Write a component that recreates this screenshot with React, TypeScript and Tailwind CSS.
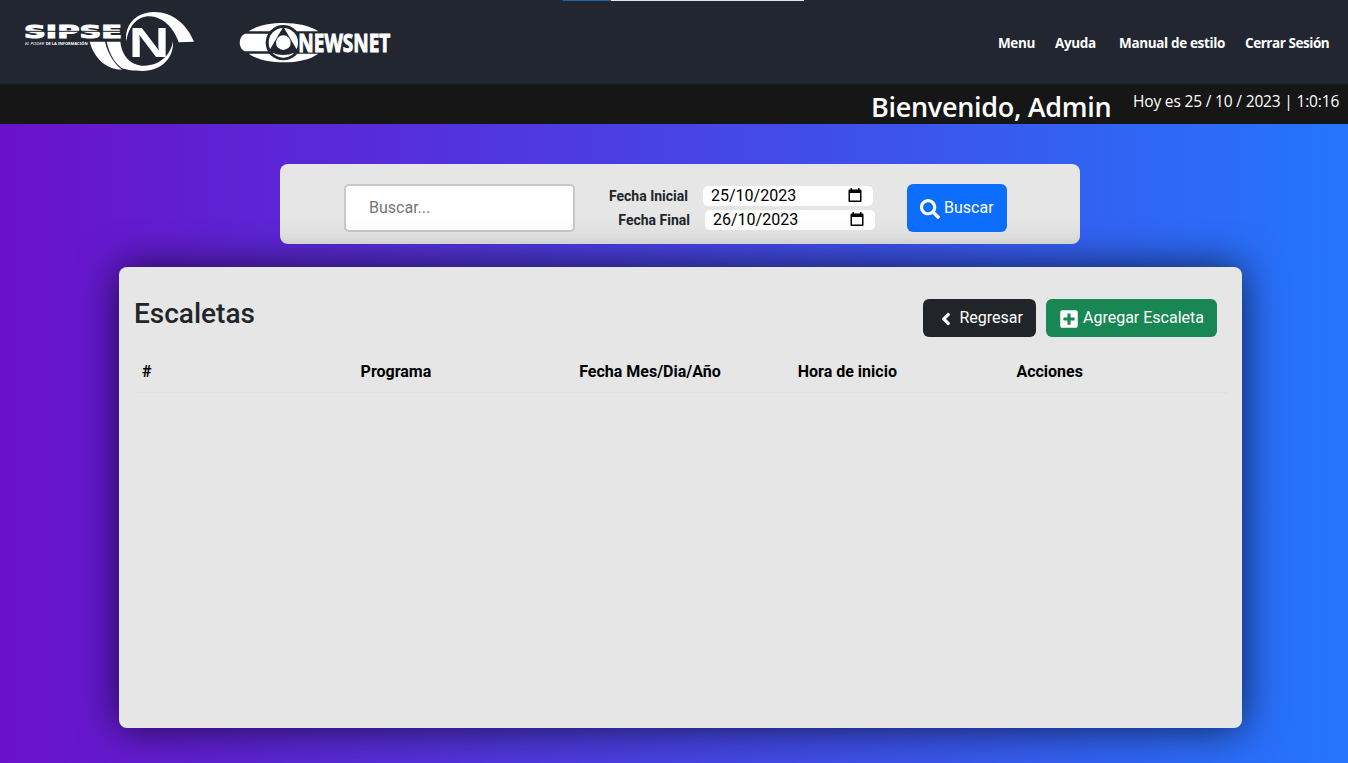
import { FaSearch, FaAngleLeft, FaPlusSquare } from "react-icons/fa";

function SipseLogo() {
  return (
    <svg width="200" height="84" viewBox="0 0 600 252" fill="#fff" role="img" aria-label="SIPSE">
      <text x="42" y="114" fontFamily="DejaVu Sans, sans-serif" fontWeight="700" fontSize="52" textLength="294" lengthAdjust="spacingAndGlyphs" stroke="#fff" strokeWidth="3">SIPSE</text>
      <path d="M44 94H334" stroke="#212631" strokeWidth="3" />
      <text x="45" y="135" fontFamily="Noto Sans, sans-serif" fontStyle="italic" fontSize="12" textLength="57" lengthAdjust="spacingAndGlyphs">EL PODER</text>
      <text x="107" y="135" fontFamily="Noto Sans, sans-serif" fontWeight="700" fontSize="12" textLength="126" lengthAdjust="spacingAndGlyphs">DE LA INFORMACIÓN</text>
      <path d="M349 124C343 78 375 36 432 36C490 36 532 76 552 125L506 127C492 84 458 50 418 49C382 49 356 78 349 124Z" />
      <path d="M239 125H285C294 162 312 190 336 209C290 209 252 174 239 125Z" />
      <path d="M290 125H331C336 168 362 197 403 197C450 197 482 165 489 124C492 172 456 213 398 213C370 213 350 210 336 205C312 187 298 160 290 125Z" />
      <text x="356" y="170" fontFamily="Liberation Sans, sans-serif" fontWeight="700" fontSize="126" textLength="122" lengthAdjust="spacingAndGlyphs">N</text>
    </svg>
  );
}

function NewsnetLogo() {
  return (
    <svg className="overflow-visible" width="180" height="64" viewBox="0 0 540 192" fill="#fff" role="img" aria-label="NEWSNET">
      <path d="M56 64C80 47 118 39 160 39C202 39 240 47 265 64Z" />
      <path d="M56 131C80 149 118 157 160 157C202 157 240 149 265 131Z" />
      <path d="M45 71H130V124H45C24 116 24 80 45 71Z" />
      <circle cx="160" cy="98" r="53" fill="#212631" />
      <circle cx="160" cy="98" r="44" />
      <path d="M160 50L206 128Q160 150 114 128Z" fill="#212631" />
      <path d="M127 128A44 44 0 0 0 193 128Q160 142 127 128Z" />
      <circle cx="160" cy="98" r="22" />
      <text x="205" y="126" fontFamily="Open Sans, sans-serif" fontWeight="700" fontSize="77" textLength="276" lengthAdjust="spacingAndGlyphs" stroke="#fff" strokeWidth="3">NEWSNET</text>
    </svg>
  );
}

function CalendarIcon() {
  return (
    <svg width="14" height="15" viewBox="0 0 14 15" aria-hidden="true">
      <path fillRule="evenodd" d="M2.5 0H4V1.5H10V0H11.5V1.5H12.5Q13.5 1.5 13.5 2.5V13Q13.5 14 12.5 14H1.5Q.5 14 .5 13V2.5Q.5 1.5 1.5 1.5H2.5ZM2 5V12.6H12V5Z" />
    </svg>
  );
}

function DateRow({ label, value, shift }: { label: string; value: string; shift: string }) {
  return (
    <div className={`flex h-5 items-center ${shift}`}>
      <span className="w-20 text-right text-sm leading-5 font-bold text-[#212529]">{label}</span>
      <div className="ml-[15px] flex h-5 w-[170px] items-center rounded-[5px] bg-white pr-[11px] pl-2">
        <span className="text-base leading-5 text-black">{value}</span>
        <span className="mb-[2px] ml-auto"><CalendarIcon /></span>
      </div>
    </div>
  );
}

export default function App() {
  const columns = ["#", "Programa", "Fecha Mes/Dia/Año", "Hora de inicio", "Acciones"];
  return (
    <div className="h-[763px] w-[1348px] overflow-hidden bg-[linear-gradient(to_right,#6a11cb,#2575fc)] font-['Roboto',sans-serif]">
      <header className="relative flex h-[84px] justify-between bg-[#212631] pl-[10px]">
        <div className="absolute top-0 left-[563px] flex h-px w-[241px] bg-[#dce5e8]">
          <div className="w-12 bg-[#1d66a5]" />
        </div>
        <div className="flex">
          <SipseLogo />
          <div className="pt-[10px] pl-5"><NewsnetLogo /></div>
        </div>
        <nav className="flex items-center pt-[2px] pr-[19px] font-['Open_Sans',sans-serif] text-[13.5px] font-bold text-white">
          <a className="mr-5 w-[37px] whitespace-nowrap tracking-[-0.4px]">Menu</a>
          <a className="mr-[23px] w-[41px] whitespace-nowrap tracking-[-0.35px]">Ayuda</a>
          <a className="mr-5 w-[106px] whitespace-nowrap tracking-[-0.35px]">Manual de estilo</a>
          <a className="w-[84px] whitespace-nowrap tracking-[-0.45px]">Cerrar Sesión</a>
        </nav>
      </header>
      <div className="flex h-10 justify-end bg-[#161616] pr-[9px] font-['Open_Sans',sans-serif] text-white">
        <h1 className="mr-[22px] w-[240px] pt-[6px] text-[27px] leading-[34px] font-semibold tracking-[-0.3px] whitespace-nowrap">Bienvenido, Admin</h1>
        <p className="w-[206px] pt-[5px] text-[15.5px] leading-6 tracking-[-0.17px] whitespace-nowrap">Hoy es 25 / 10 / 2023 | 1:0:16</p>
      </div>
      <section className="mt-10 ml-[280px] flex h-20 w-[800px] rounded-lg bg-[#e6e6e6] pt-5 pl-16">
        <input aria-label="Buscar" placeholder="Buscar..." className="h-12 w-[231px] rounded-[5px] border-2 border-[#c8c8c8] bg-white px-[23px] pb-[2px] text-base text-black placeholder:text-[#757575]" />
        <div className="ml-[33px] flex w-[270px] flex-col gap-1 pt-[2px]">
          <DateRow label="Fecha Inicial" value="25/10/2023" shift="" />
          <DateRow label="Fecha Final" value="26/10/2023" shift="pl-[2px]" />
        </div>
        <button className="ml-[29px] flex h-12 w-[100px] items-center rounded-md bg-[#0d6efd] pl-[13px] text-base text-white">
          <FaSearch className="mt-[2px] mr-1 size-5" />Buscar
        </button>
      </section>
      <main className="relative mt-[23px] ml-[119px] h-[461px] w-[1123px] rounded-lg bg-[#e6e6e6] px-[15px] pt-8 shadow-[0_0_40px_rgba(0,0,0,0.7)]">
        <div className="flex items-start justify-between pr-[10px]">
          <h2 className="-mt-[2px] text-[28px] leading-[34px] font-medium text-[#212529]">Escaletas</h2>
          <div className="flex gap-[10px]">
            <button className="flex h-[38px] w-[113px] items-center rounded-md bg-[#212529] pl-[13px] text-base text-white">
              <FaAngleLeft className="mt-[2px] mr-[3.5px] size-5" />Regresar
            </button>
            <button className="flex h-[38px] w-[171px] items-center rounded-md bg-[#198754] pl-[13px] text-base text-white">
              <FaPlusSquare className="mt-[2px] mr-1 size-5" />Agregar Escaleta
            </button>
          </div>
        </div>
        <table className="mt-[14px] w-full table-fixed border-collapse">
          <thead>
            <tr className="border-b border-[#dfe0e1]">
              {columns.map((column) => (
                <th key={column} className="h-[41px] px-2 pt-[9px] pb-[7px] text-left text-base font-bold text-black">{column}</th>
              ))}
            </tr>
          </thead>
        </table>
      </main>
    </div>
  );
}
